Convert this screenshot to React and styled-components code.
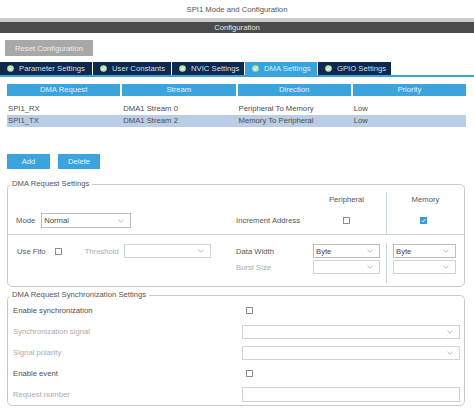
import React from "react";
import styled, { createGlobalStyle } from "styled-components";

const GlobalStyle = createGlobalStyle`
  html, body {
    margin: 0;
    padding: 0;
    background: #fff;
  }
  body {
    font-family: "Liberation Sans", Arial, sans-serif;
    font-size: 7.7px;
    color: #555;
  }
  * {
    box-sizing: border-box;
  }
`;

const Page = styled.div`
  width: 474px;
  height: 409px;
  overflow: hidden;
`;

const Title = styled.div`
  height: 18px;
  line-height: 19px;
  text-align: center;
  color: #555;
`;

const Strip = styled.div`
  height: 4px;
  background: #cbcbcb;
`;

const ConfigBar = styled.div`
  height: 11px;
  line-height: 11px;
  background: #4b4b4b;
  color: #e4e4e4;
  text-align: center;
`;

const Toolbar = styled.div`
  padding: 7px 0 0 5px;
`;

const GreyButton = styled.button`
  width: 88px;
  height: 16px;
  padding: 0;
  border: none;
  background: #a8a8a8;
  color: #ececec;
  font: inherit;
`;

const TabBar = styled.div`
  display: flex;
  gap: 1px;
  margin-top: 6px;
  border-bottom: 2px solid #3ba3dc;
`;

const Tab = styled.div`
  display: flex;
  align-items: center;
  gap: 5px;
  width: ${({ $w }) => $w}px;
  height: 13px;
  padding-left: 7px;
  background: ${({ $active }) => ($active ? "#3ba3dc" : "#0d2a4e")};
  color: ${({ $active }) => ($active ? "#d9eefa" : "#d6dee9")};
`;

const TableWrap = styled.div`
  width: 459px;
  margin: 7px 0 0 7px;
`;

const HeadRow = styled.div`
  display: grid;
  grid-template-columns: repeat(4, 1fr);
  column-gap: 2px;
`;

const HeadCell = styled.div`
  height: 12px;
  line-height: 12px;
  text-align: center;
  background: #3ca4dd;
  color: #e3f2fb;
`;

const BodyRow = styled.div`
  display: grid;
  grid-template-columns: repeat(4, 1fr);
  column-gap: 2px;
  height: 12px;
  line-height: 12px;
  margin-top: ${({ $first }) => ($first ? "7px" : "0")};
  background: ${({ $selected }) => ($selected ? "#b9cde5" : "transparent")};
  color: #4e4e4e;
`;

const BodyCell = styled.div`
  padding-left: 1px;
  white-space: nowrap;
`;

const Actions = styled.div`
  display: flex;
  gap: 8px;
  margin: 27px 0 0 7px;
`;

const BlueButton = styled.button`
  width: ${({ $w }) => $w}px;
  height: 15px;
  padding: 0;
  border: none;
  background: #3ca4dd;
  color: #e6f4fc;
  font: inherit;
`;

const Group = styled.fieldset`
  width: 458px;
  margin: ${({ $top }) => $top}px 0 0 7px;
  padding: 0 0 ${({ $bottom }) => $bottom}px 0;
  min-width: 0;
  border: 1px solid #cacaca;
  border-radius: 5px;
`;

const Legend = styled.legend`
  padding: 0 3px 0 2px;
  margin-left: 2px;
  line-height: 10px;
  color: #555;
`;

const DmaRow = styled.div`
  display: grid;
  grid-template-columns: 228px 77px 73px 78px;
  height: ${({ $h }) => $h}px;
  padding-top: ${({ $pt }) => $pt || 0}px;
  border-bottom: ${({ $divider }) => ($divider ? "1px solid #c9d2e0" : "none")};
  margin-top: ${({ $mt }) => $mt || 0}px;
`;

const Cell = styled.div`
  display: flex;
  align-items: center;
  gap: ${({ $gap }) => $gap || 0}px;
  padding-left: ${({ $pl }) => $pl || 0}px;
  padding-right: ${({ $pr }) => $pr || 0}px;
  justify-content: ${({ $center }) => ($center ? "center" : "flex-start")};
  border-left: ${({ $rule }) => ($rule ? "1px solid #c9d2e0" : "none")};
  color: ${({ $muted }) => ($muted ? "#ababab" : "#555")};
  white-space: nowrap;
`;

const FieldNote = styled.span`
  margin-left: ${({ $ml }) => $ml}px;
  color: ${({ $muted }) => ($muted ? "#ababab" : "inherit")};
  display: inline-flex;
`;

const SelectBox = styled.div`
  display: flex;
  align-items: center;
  justify-content: space-between;
  width: ${({ $w }) => ($w ? `${$w}px` : "100%")};
  height: ${({ $h }) => $h || 14}px;
  padding: 0 6px 0 2px;
  border: 1px solid ${({ $disabled }) => ($disabled ? "#d3d3d3" : "#bdbdbd")};
  background: #fff;
  color: #444;
`;

const Box = styled.span`
  display: inline-flex;
  align-items: center;
  justify-content: center;
  width: 7px;
  height: 7px;
  border: 1px solid ${({ $checked }) => ($checked ? "#3b99d8" : "#8e8e8e")};
  background: ${({ $checked }) => ($checked ? "#3b99d8" : "#fff")};
  flex-shrink: 0;
`;

const SyncRow = styled.div`
  display: grid;
  grid-template-columns: 234px 218px;
  height: 21px;
`;

const SyncLabel = styled.div`
  display: flex;
  align-items: center;
  padding-left: 5px;
  color: ${({ $muted }) => ($muted ? "#ababab" : "#4e4e4e")};
`;

const SyncControl = styled.div`
  display: flex;
  align-items: center;
  padding-left: ${({ $pl }) => $pl || 0}px;
`;

const TextInput = styled.div`
  width: 100%;
  height: 15px;
  border: 1px solid #cfcfcf;
  background: #fff;
`;

const Chevron = () => (
  <svg width="6" height="4" viewBox="0 0 6 4">
    <polyline points="0.5,0.8 3,3.2 5.5,0.8" fill="none" stroke="#a6a6a6" strokeWidth="0.8" />
  </svg>
);

const TabIcon = () => (
  <svg width="7" height="7" viewBox="0 0 7 7">
    <circle cx="3.5" cy="3.5" r="3.3" fill="#b7e3b0" />
    <polyline points="1.9,3.6 3.1,4.7 5.1,2.4" fill="none" stroke="#fff" strokeWidth="1" />
  </svg>
);

const Select = ({ value = "", ...rest }) => (
  <SelectBox {...rest}>
    <span>{value}</span>
    <Chevron />
  </SelectBox>
);

const Check = ({ checked }) => (
  <Box $checked={checked}>
    {checked && (
      <svg width="5" height="5" viewBox="0 0 5 5">
        <polyline points="0.8,2.6 2,3.8 4.3,1.2" fill="none" stroke="#fff" strokeWidth="1" />
      </svg>
    )}
  </Box>
);

const tabs = [
  { label: "Parameter Settings", w: 92 },
  { label: "User Constants", w: 78 },
  { label: "NVIC Settings", w: 72 },
  { label: "DMA Settings", w: 72, active: true },
  { label: "GPIO Settings", w: 73 },
];

const requests = [
  ["SPI1_RX", "DMA1 Stream 0", "Peripheral To Memory", "Low"],
  ["SPI1_TX", "DMA1 Stream 2", "Memory To Peripheral", "Low"],
];

export default function App() {
  return (
    <Page>
      <GlobalStyle />
      <Title>SPI1 Mode and Configuration</Title>
      <Strip />
      <ConfigBar>Configuration</ConfigBar>
      <Toolbar>
        <GreyButton>Reset Configuration</GreyButton>
      </Toolbar>

      <TabBar>
        {tabs.map((t) => (
          <Tab key={t.label} $w={t.w} $active={t.active}>
            <TabIcon />
            {t.label}
          </Tab>
        ))}
      </TabBar>

      <TableWrap>
        <HeadRow>
          <HeadCell>DMA Request</HeadCell>
          <HeadCell>Stream</HeadCell>
          <HeadCell>Direction</HeadCell>
          <HeadCell>Priority</HeadCell>
        </HeadRow>
        {requests.map((r, i) => (
          <BodyRow key={r[0]} $first={i === 0} $selected={i === 1}>
            {r.map((c) => (
              <BodyCell key={c}>{c}</BodyCell>
            ))}
          </BodyRow>
        ))}
      </TableWrap>

      <Actions>
        <BlueButton $w={43}>Add</BlueButton>
        <BlueButton $w={42}>Delete</BlueButton>
      </Actions>

      <Group $top={10} $bottom={3}>
        <Legend>DMA Request Settings</Legend>
        <DmaRow $h={15} $mt={3}>
          <Cell />
          <Cell />
          <Cell $center $pr={6}>Peripheral</Cell>
          <Cell $center $rule>Memory</Cell>
        </DmaRow>
        <DmaRow $h={28} $divider>
          <Cell $pl={8} $gap={6}>
            Mode
            <Select value="Normal" $w={90} $h={15} />
          </Cell>
          <Cell>Increment Address</Cell>
          <Cell $center $pr={6}>
            <Check />
          </Cell>
          <Cell $center $rule $pr={4}>
            <Check checked />
          </Cell>
        </DmaRow>
        <DmaRow $h={24} $pt={8}>
          <Cell $pl={9}>
            Use Fifo
            <FieldNote $ml={9}>
              <Check />
            </FieldNote>
            <FieldNote $ml={23} $muted>Threshold</FieldNote>
            <FieldNote $ml={5}>
              <Select $w={87} $disabled />
            </FieldNote>
          </Cell>
          <Cell>Data Width</Cell>
          <Cell $pr={6}>
            <Select value="Byte" />
          </Cell>
          <Cell $rule $pl={6} $pr={8}>
            <Select value="Byte" />
          </Cell>
        </DmaRow>
        <DmaRow $h={16}>
          <Cell />
          <Cell $muted>Burst Size</Cell>
          <Cell $pr={6}>
            <Select $disabled />
          </Cell>
          <Cell $rule $pl={6} $pr={8}>
            <Select $disabled />
          </Cell>
        </DmaRow>
        <DmaRow $h={8}>
          <Cell />
          <Cell />
          <Cell />
          <Cell $rule />
        </DmaRow>
      </Group>

      <Group $top={3} $bottom={0}>
        <Legend>DMA Request Synchronization Settings</Legend>
        <SyncRow>
          <SyncLabel>Enable synchronization</SyncLabel>
          <SyncControl $pl={4}>
            <Check />
          </SyncControl>
        </SyncRow>
        <SyncRow>
          <SyncLabel $muted>Synchronization signal</SyncLabel>
          <SyncControl>
            <Select $disabled />
          </SyncControl>
        </SyncRow>
        <SyncRow>
          <SyncLabel $muted>Signal polarity</SyncLabel>
          <SyncControl>
            <Select $disabled />
          </SyncControl>
        </SyncRow>
        <SyncRow>
          <SyncLabel>Enable event</SyncLabel>
          <SyncControl $pl={4}>
            <Check />
          </SyncControl>
        </SyncRow>
        <SyncRow>
          <SyncLabel $muted>Request number</SyncLabel>
          <SyncControl>
            <TextInput />
          </SyncControl>
        </SyncRow>
      </Group>
    </Page>
  );
}
